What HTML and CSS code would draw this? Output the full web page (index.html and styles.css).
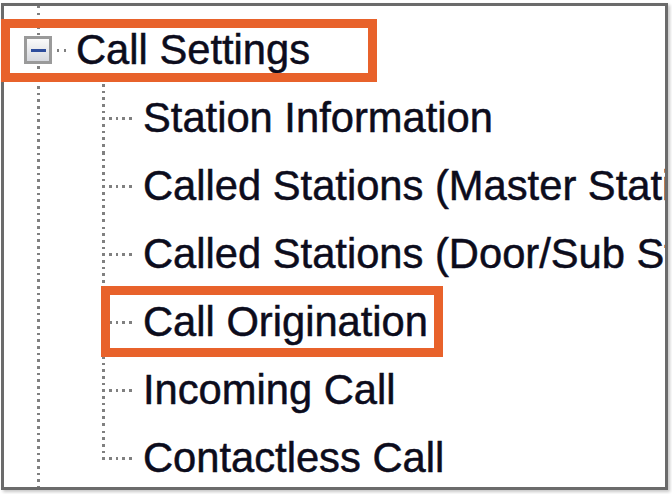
FILE: index.html
```html
<!DOCTYPE html>
<html lang="en">
<head>
<meta charset="utf-8">
<title>Call Settings tree</title>
<link rel="stylesheet" href="styles.css">
</head>
<body>
<div class="frame">
  <div class="tree">
    <div class="node highlight-parent">
      <span class="expander"></span>
      <span class="stub"></span>
      <span class="label">Call Settings</span>
    </div>
    <ul class="children">
      <li class="child"><span class="label">Station Information</span></li>
      <li class="child"><span class="label">Called Stations (Master Stations)</span></li>
      <li class="child"><span class="label">Called Stations (Door/Sub Stations)</span></li>
      <li class="child highlight-child"><span class="label">Call Origination</span></li>
      <li class="child"><span class="label">Incoming Call</span></li>
      <li class="child"><span class="label">Contactless Call</span></li>
    </ul>
  </div>
</div>
</body>
</html>
```

FILE: styles.css
```css
html, body {
  margin: 0;
  padding: 0;
  background: #ffffff;
}

body {
  width: 672px;
  height: 494px;
  overflow: hidden;
  font-family: "Liberation Sans", Arial, sans-serif;
  color: #0c0c1c;
}

.frame {
  position: relative;
  box-sizing: border-box;
  margin: 3px 0 0 1px;
  width: 667px;
  height: 487px;
  padding: 3px;
  overflow: hidden;
  background: #ffffff;
  box-shadow: 2px 2px 3px rgba(0, 0, 0, 0.22);
}

.frame::after {
  content: "";
  position: absolute;
  inset: 0;
  border: 3px solid #6b6b6b;
  z-index: 1;
  pointer-events: none;
}

.tree {
  padding-top: 10px;
  background-image: repeating-linear-gradient(to bottom, #808080 0 2.5px, transparent 2.5px 6.667px);
  background-position: 33px 0;
  background-size: 3px 100%;
  background-repeat: no-repeat;
}

.node {
  position: relative;
  height: 68px;
  display: flex;
  align-items: center;
  white-space: nowrap;
}

.expander {
  box-sizing: border-box;
  margin-left: 20px;
  width: 28px;
  height: 28px;
  flex: none;
  border: 3px solid #9a9a9a;
  background: linear-gradient(#fbfbfb, #d6d8de);
  display: flex;
  align-items: center;
  justify-content: center;
}

.expander::before {
  content: "";
  width: 15px;
  height: 3px;
  background: #2e4d9c;
}

.stub {
  width: 24px;
  height: 3px;
  flex: none;
  background-image: repeating-linear-gradient(to right, #808080 0 2.5px, transparent 2.5px 6.667px);
  background-position: 5px 0;
  background-size: 12px 3px;
  background-repeat: no-repeat;
}

.label {
  font-size: 41.7px;
  line-height: 68px;
  white-space: nowrap;
  -webkit-text-stroke: 0.5px #0c0c1c;
}

.highlight-parent::after,
.highlight-child::after {
  content: "";
  position: absolute;
  box-sizing: border-box;
  border: 9px solid #e8622b;
  z-index: 2;
  pointer-events: none;
}

.highlight-parent::after {
  left: -3px;
  top: 3px;
  width: 376px;
  height: 63px;
}

.children {
  margin: 0;
  padding: 0;
  list-style: none;
}

.child {
  position: relative;
  height: 68px;
  display: flex;
  align-items: center;
  padding-left: 139px;
  white-space: nowrap;
  background-image:
    repeating-linear-gradient(to bottom, #808080 0 2.5px, transparent 2.5px 6.667px),
    repeating-linear-gradient(to right, #808080 0 2.5px, transparent 2.5px 6.667px);
  background-position: 98px 0, 104.5px 50%;
  background-size: 3px 100%, 24px 3px;
  background-repeat: no-repeat;
}

.child:last-child {
  background-size: 3px 36px, 24px 3px;
}

.highlight-child::after {
  left: 97px;
  top: -2px;
  width: 342px;
  height: 71px;
}
```
